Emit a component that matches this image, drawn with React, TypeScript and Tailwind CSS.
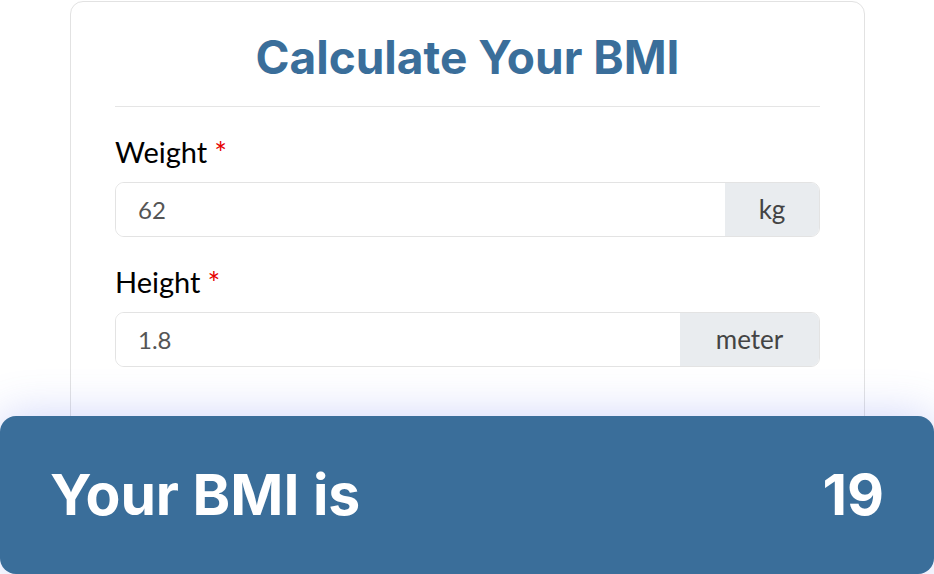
import React from "react";

function Field({ label, value, unit, unitW }: { label: string; value: string; unit: string; unitW: string }) {
  return (
    <div className="flex flex-col">
      <div className="h-[40px] flex items-center text-[29px] text-black" style={{ fontFamily: "Lato, 'Noto Sans', sans-serif" }}>
        <span>{label}</span>
        <span className="text-[#e60000] ml-[7px] text-[30px]">*</span>
      </div>
      <div className="mt-[10px] flex h-[55px] rounded-[9px] border border-[#e3e3e3] overflow-hidden" style={{ fontFamily: "Lato, 'Noto Sans', sans-serif" }}>
        <div className="flex-1 flex items-center pl-[22px] text-[24px] text-[#555] bg-white">{value}</div>
        <div className={`${unitW} flex items-center justify-center bg-[#e9ecef] text-[26px] text-[#444]`}>{unit}</div>
      </div>
    </div>
  );
}

export default function App() {
  return (
    <div className="w-[934px] h-[574px] overflow-hidden bg-white relative">
      <div className="ml-[70px] mt-[1px] w-[795px] h-[460px] rounded-[13px] border border-[#e2e2e2] px-[44px]">
        <div
          className="h-[105px] pt-[6px] flex items-center justify-center text-[46px] font-bold text-[#3a6e9a] border-b border-[#e5e5e5]"
          style={{ fontFamily: "Inter, 'Liberation Sans', sans-serif" }}
        >
          Calculate Your BMI
        </div>
        <div className="mt-[25px]">
          <Field label="Weight" value="62" unit="kg" unitW="w-[94px]" />
        </div>
        <div className="mt-[25px]">
          <Field label="Height" value="1.8" unit="meter" unitW="w-[139px]" />
        </div>
      </div>
      <div
        className="relative z-10 -mt-[45px] h-[158px] rounded-[16px] bg-[#3a6e9a] flex items-center justify-between px-[50px] text-white font-bold text-[57px] shadow-[0_0_45px_rgba(90,110,235,0.3)]"
        style={{ fontFamily: "Inter, 'Liberation Sans', sans-serif" }}
      >
        <span>Your BMI is</span>
        <span>19</span>
      </div>
    </div>
  );
}
